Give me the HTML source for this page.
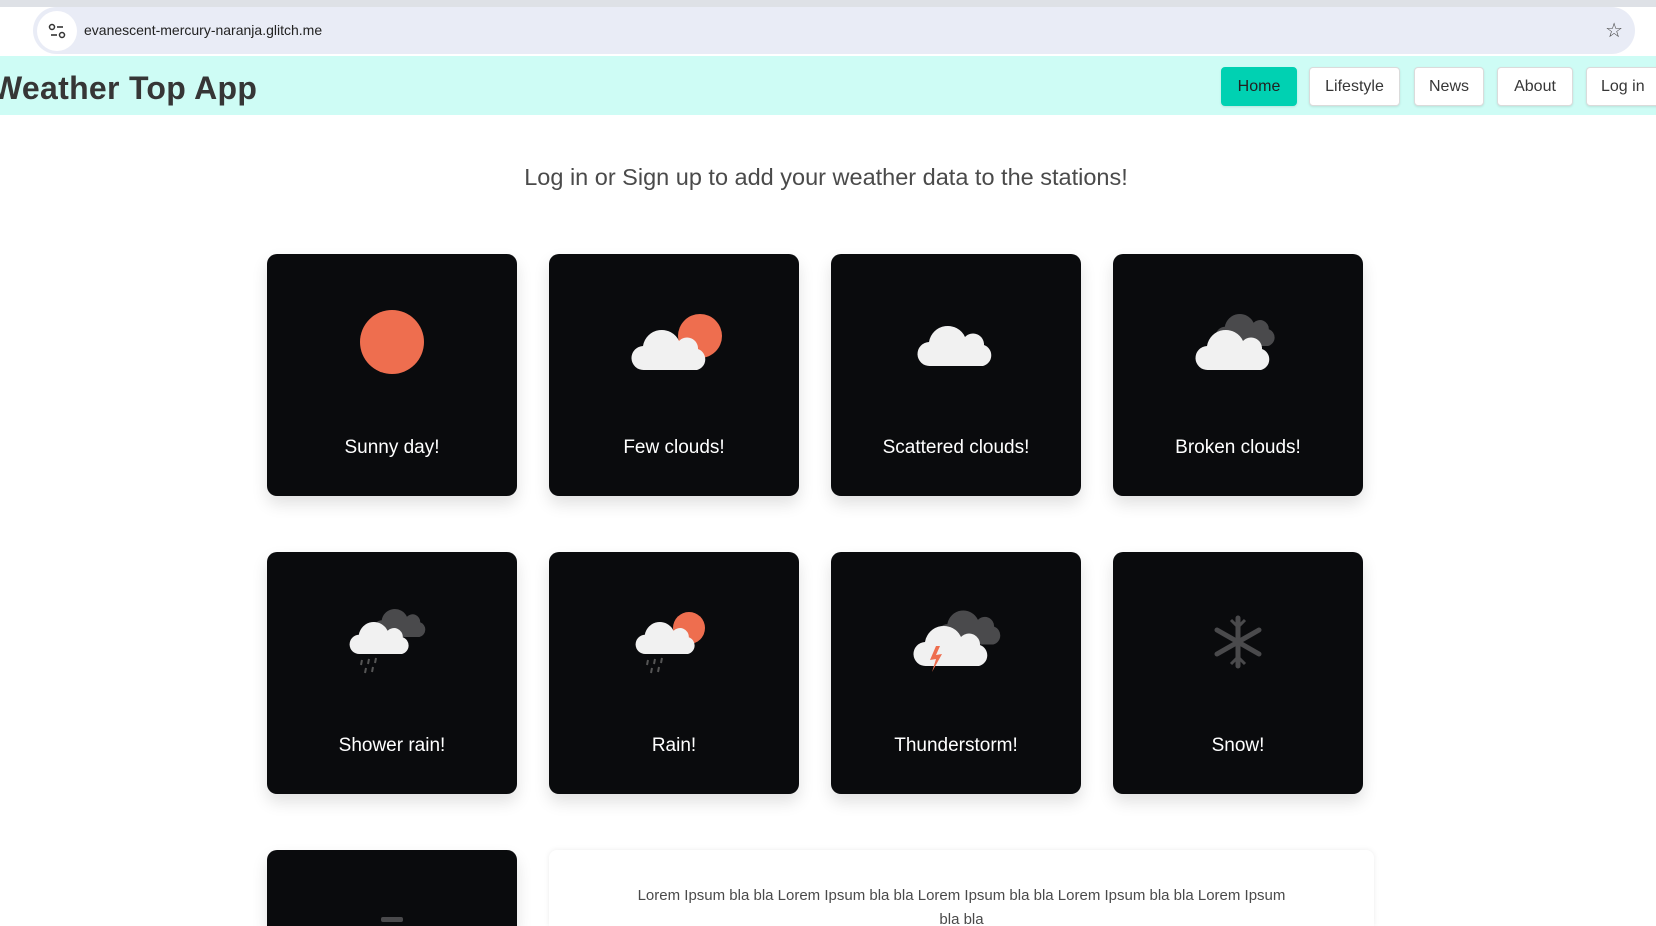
<!DOCTYPE html>
<html><head><meta charset="utf-8"><style>
*{box-sizing:border-box;margin:0;padding:0}
html,body{width:1656px;height:926px;overflow:hidden}
body{background:#fff;font-family:"Liberation Sans",sans-serif;position:relative}
.top{position:absolute;left:0;top:0;width:1656px;height:56px;background:#fff}
.strip{position:absolute;left:0;top:0;width:1656px;height:7px;background:#dee1e6}
.pill{position:absolute;left:33px;top:7px;width:1602px;height:47px;border-radius:24px;background:#e9ecf6}
.pill .ic{position:absolute;left:4px;top:4px;width:40px;height:40px;border-radius:50%;background:#fff}
.url{position:absolute;left:51px;top:15px;font-size:14px;color:#222}
.nav{position:absolute;left:0;top:56px;width:1656px;height:59px;background:#cefcf5}
.title{position:absolute;left:-8px;top:14px;font-size:32px;font-weight:bold;color:#363636;letter-spacing:0.3px}
.btn{position:absolute;top:11px;height:39px;border:1px solid #dbdbdb;border-radius:4px;background:#fff;font-size:16px;color:#363636;line-height:37px;text-align:center;box-shadow:0 1px 2px rgba(0,0,0,.1)}
h2{position:absolute;left:0;width:1652px;top:164px;text-align:center;font-size:23.5px;font-weight:normal;color:#4a4a4a}
.card{position:absolute;width:250px;height:242px;background:#0a0b0d;border-radius:10px;box-shadow:0 8px 16px rgba(0,0,0,.12)}
.card .lbl{position:absolute;left:0;right:0;top:183px;text-align:center;color:#fff;font-size:19px}
.card svg{position:absolute;left:75px;top:50px}
.lorem{position:absolute;left:549px;top:850px;width:825px;height:76px;border-radius:8px 8px 0 0;background:#fff;box-shadow:0 0 6px rgba(0,0,0,.08);text-align:center;font-size:15px;color:#4a4a4a;line-height:24px;padding-top:34px}
.lorem p{width:655px;margin:0 auto}
</style></head><body>
<div class="top"><div class="strip"></div><div class="pill"><div class="ic"><svg width="40" height="40"><circle cx="15" cy="16" r="2.5" fill="none" stroke="#333" stroke-width="1.5"/><line x1="20" y1="16" x2="26" y2="16" stroke="#333" stroke-width="1.6"/><line x1="14" y1="24" x2="20" y2="24" stroke="#333" stroke-width="1.6"/><circle cx="25" cy="24" r="2.5" fill="none" stroke="#333" stroke-width="1.5"/></svg></div><div class="url">evanescent-mercury-naranja.glitch.me</div>
<div style="position:absolute;right:12px;top:11px;font-size:20px;color:#444">☆</div></div></div>
<div class="nav"><div class="title">Weather Top App</div>
<div class="btn" style="left:1221px;width:76px;background:#00d1b2;border-color:#00d1b2;color:#222">Home</div>
<div class="btn" style="left:1309px;width:91px">Lifestyle</div>
<div class="btn" style="left:1414px;width:70px">News</div>
<div class="btn" style="left:1497px;width:76px">About</div>
<div class="btn" style="left:1586px;width:80px;text-align:left;padding-left:14px">Log in</div>
</div>
<h2>Log in or Sign up to add your weather data to the stations!</h2>

<svg width="0" height="0" style="position:absolute"><defs>
<path id="cl" d="M12 50 a12 12 0 0 1 -1 -24 a19 19 0 0 1 36 -5 a11 11 0 0 1 19 8 a11 11 0 0 1 -1 21 z"/>
</defs></svg>

<div class="card" style="left:267px;top:254px"><svg width="100" height="80"><circle cx="50" cy="38" r="32" fill="#ee6e4f"/></svg><div class="lbl">Sunny day!</div></div>
<div class="card" style="left:549px;top:254px"><svg width="100" height="80"><circle cx="76" cy="32" r="22" fill="#ee6e4f"/><use href="#cl" x="8" y="16" fill="#f1f1f1"/></svg><div class="lbl">Few clouds!</div></div>
<div class="card" style="left:831px;top:254px"><svg width="100" height="80"><use href="#cl" x="12" y="12" fill="#f1f1f1"/></svg><div class="lbl">Scattered clouds!</div></div>
<div class="card" style="left:1113px;top:254px"><svg width="100" height="80"><g transform="translate(28 2) scale(.8)" fill="#4a4a4c"><use href="#cl"/></g><use href="#cl" x="8" y="16" fill="#f1f1f1"/></svg><div class="lbl">Broken clouds!</div></div>

<div class="card" style="left:267px;top:552px"><svg width="100" height="90"><g transform="translate(32 0) scale(.7)" fill="#4a4a4c"><use href="#cl"/></g><g transform="translate(8 12) scale(.8)"><use href="#cl" fill="#f1f1f1"/></g><g stroke="#555" stroke-width="2"><line x1="20" y1="58" x2="19" y2="63"/><line x1="27" y1="57" x2="26" y2="62"/><line x1="34" y1="56" x2="33" y2="61"/><line x1="24" y1="66" x2="23" y2="71"/><line x1="31" y1="65" x2="30" y2="70"/></g></svg><div class="lbl">Shower rain!</div></div>
<div class="card" style="left:549px;top:552px"><svg width="100" height="90"><circle cx="65" cy="26" r="16" fill="#ee6e4f"/><g transform="translate(12 12) scale(.8)"><use href="#cl" fill="#f1f1f1"/></g><g stroke="#555" stroke-width="2"><line x1="24" y1="58" x2="23" y2="63"/><line x1="31" y1="57" x2="30" y2="62"/><line x1="38" y1="56" x2="37" y2="61"/><line x1="28" y1="66" x2="27" y2="71"/><line x1="35" y1="65" x2="34" y2="70"/></g></svg><div class="lbl">Rain!</div></div>
<div class="card" style="left:831px;top:552px"><svg width="100" height="90"><g transform="translate(32 0) scale(.85)" fill="#4a4a4c"><use href="#cl"/></g><use href="#cl" x="8" y="14" fill="#f1f1f1"/><path d="M30 44 L24 58 L30 57 L26 70 L36 52 L30 53 L34 44Z" fill="#ee6e4f"/></svg><div class="lbl">Thunderstorm!</div></div>
<div class="card" style="left:1113px;top:552px"><svg width="100" height="90"><g stroke="#4a4a4c" stroke-width="5" stroke-linecap="round"><line x1="50" y1="16" x2="50" y2="64"/><line x1="29" y1="28" x2="71" y2="52"/><line x1="29" y1="52" x2="71" y2="28"/></g><g stroke="#4a4a4c" stroke-width="3" fill="none"><path d="M43 18 L50 25 L57 18M43 62 L50 55 L57 62"/></g></svg><div class="lbl">Snow!</div></div>

<div class="card" style="left:267px;top:850px;height:76px;border-radius:10px 10px 0 0"><svg width="100" height="30"><rect x="39" y="17" width="22" height="5" rx="2" fill="#4a4a4c"/></svg></div>
<div class="lorem"><p>Lorem Ipsum bla bla Lorem Ipsum bla bla Lorem Ipsum bla bla Lorem Ipsum bla bla Lorem Ipsum bla bla</p></div>
</body></html>
